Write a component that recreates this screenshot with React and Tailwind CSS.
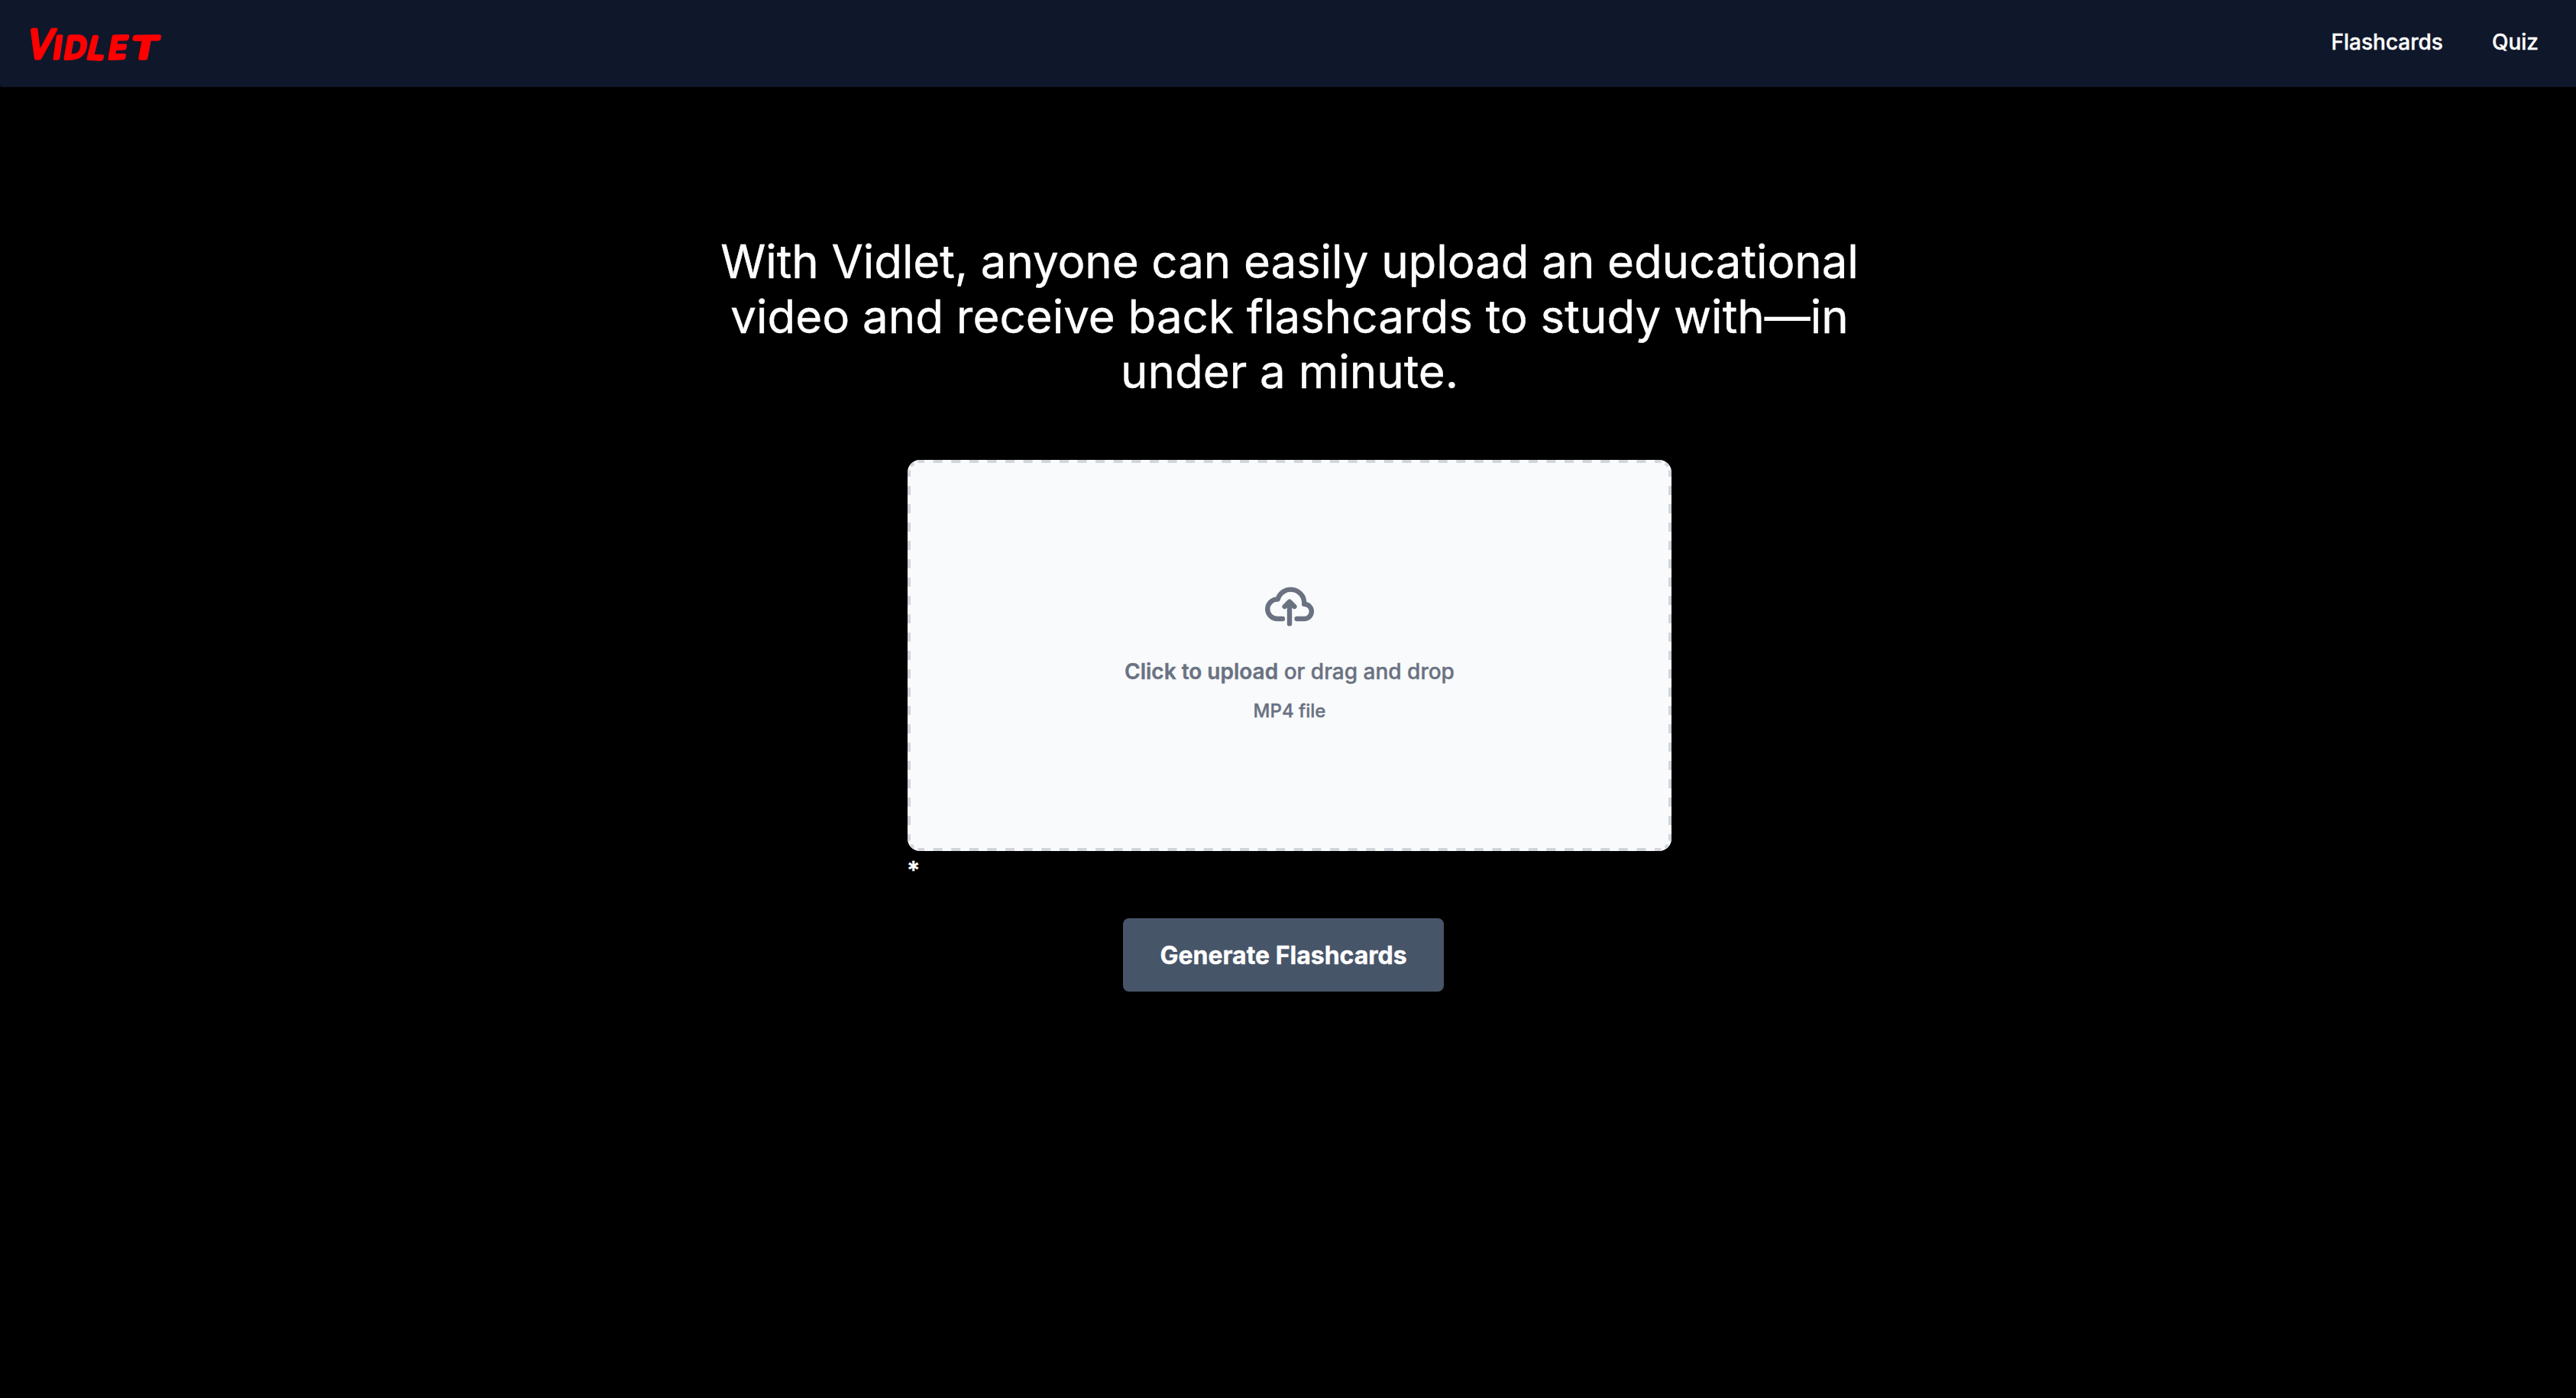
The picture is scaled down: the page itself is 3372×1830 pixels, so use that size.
import { useState } from 'react';

function Logo() {
  return (
    <svg className="w-[190px] h-20 overflow-visible" viewBox="0 0 190 80" fill="#ff0000" stroke="#ff0000" strokeLinejoin="round" strokeWidth="5" fontFamily="Inter, sans-serif">
      <g transform="skewX(-12)">
        <text fontSize="51" x="10" y="59.5" textLength="33" lengthAdjust="spacingAndGlyphs">V</text>
        <text fontSize="39" y="59.5" x="45 59 89 117" rotate="-4 -2 2 -2">IDLE</text>
        <text fontSize="39" x="146" y="59.5" textLength="35" lengthAdjust="spacingAndGlyphs" rotate="-1">T</text>
      </g>
    </svg>
  );
}

function Navbar() {
  return (
    <nav className="bg-[#0f172a] text-white flex items-center justify-between h-[114px] pl-9 pr-[49px] rounded-bl">
      <a href="#" aria-label="Vidlet"><Logo /></a>
      <div className="flex items-center gap-16 text-[28px] leading-10 font-medium pb-1">
        <a href="#flashcards">Flashcards</a>
        <a href="#quiz">Quiz</a>
      </div>
    </nav>
  );
}

function DashedBorder() {
  return (
    <svg className="absolute inset-0 w-[1000px] h-[512px]" viewBox="0 0 1000 512" fill="none" stroke="#d1d5db" strokeWidth="4">
      {/* Sides */}
      <path strokeDasharray="12 11.61" strokeDashoffset="6" d="M16 2H984M16 510H984" />
      <path strokeDasharray="12 12" strokeDashoffset="6" d="M2 16V496M998 16V496" />
      {/* Corners */}
      <path
        strokeDasharray="5.5 5.5"
        strokeDashoffset="2.75"
        d="M2 16A14 14 0 0 1 16 2M984 2A14 14 0 0 1 998 16M998 496A14 14 0 0 1 984 510M16 510A14 14 0 0 1 2 496"
      />
    </svg>
  );
}

function UploadBox({ onSelect }) {
  return (
    <label className="relative flex flex-col items-center justify-center w-[1000px] h-[512px] pt-10 pb-12 rounded-2xl bg-gray-50 text-gray-500 cursor-pointer overflow-hidden">
      <DashedBorder />
      <svg className="w-16 h-16 mb-[33px] mt-px" fill="none" viewBox="0 0 20 16" stroke="currentColor">
        <path
          strokeLinecap="round"
          strokeLinejoin="round"
          strokeWidth="2"
          d="M13 13h3a3 3 0 0 0 0-6h-.025A5.56 5.56 0 0 0 16 6.5 5.5 5.5 0 0 0 5.207 5.021C5.137 5.017 5.071 5 5 5a4 4 0 0 0 0 8h2.167M10 15V6m0 0L8 8m2-2 2 2"
        />
      </svg>
      <p className="mb-4 text-[28px] leading-10 font-medium">
        <span className="font-semibold">Click to upload</span> or drag and drop
      </p>
      <p className="text-2xl font-medium">MP4 file</p>
      <input type="file" accept="video/mp4" className="hidden" onChange={e => onSelect(e.target.files[0])} />
    </label>
  );
}

function App() {
  const [file, setFile] = useState(null);

  return (
    <div className="min-h-screen bg-black text-white font-['Inter',sans-serif] [-webkit-text-stroke:0.4px]">
      <Navbar />
      <main className="flex flex-col items-center pt-48 pl-1">
        <h1 className="w-[1536px] text-center text-6xl leading-[72px] font-normal">
          <span className="tracking-[-0.08px]">With Vidlet, anyone can easily upload an educational</span><br />
          video and receive back flashcards to study with—in<br />
          under a minute.
        </h1>
        <div className="w-[1000px] mt-20">
          <UploadBox onSelect={setFile} />
          <p className="h-[88px] text-[32px] leading-[51px] font-semibold -ml-px">*{file && file.name}</p>
        </div>
        <button className="w-[420px] h-24 mr-4 rounded-lg bg-[#475569] text-[32px] leading-12 font-bold pt-0.5" type="button">
          Generate Flashcards
        </button>
      </main>
    </div>
  );
}

export default App;
